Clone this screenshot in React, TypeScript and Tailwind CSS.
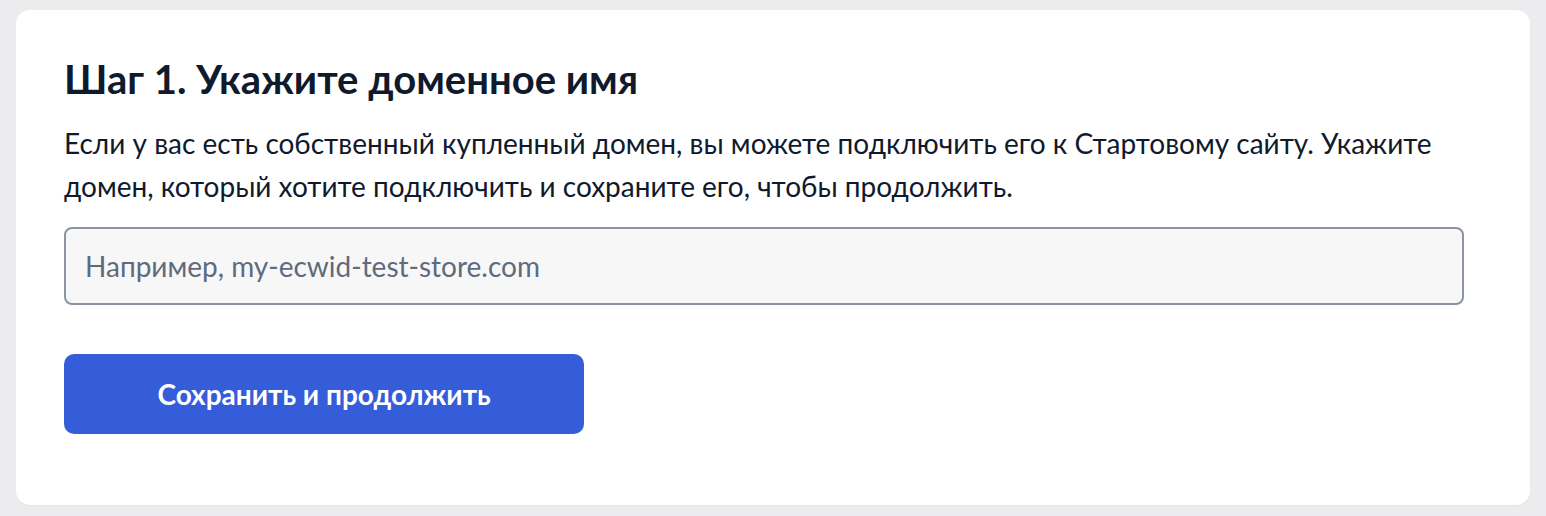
export default function App() {
  return (
    <div className="min-h-[516px] bg-[#ececee] px-4 pt-[10px] pb-[11px] font-['Lato',sans-serif]">
      <div className="rounded-[14px] bg-white px-12 pt-[45px] pb-[71px] shadow-[0_1px_2px_rgba(0,0,0,0.04)]">
        <h1 className="text-[40px] font-bold leading-[48px] text-[#0f1a2c]">
          Шаг 1. Укажите доменное имя
        </h1>
        <p className="mt-[19px] max-w-[1400px] text-[28px] leading-[43px] text-[#0f1a2c]">
          Если у вас есть собственный купленный домен, вы можете подключить его к Стартовому сайту. Укажите
          домен, который хотите подключить и сохраните его, чтобы продолжить.
        </p>
        <input
          type="text"
          placeholder="Например, my-ecwid-test-store.com"
          className="mt-[19px] block h-[78px] w-[1400px] rounded-[8px] border-2 border-[#8a94a3] bg-[#f7f7f7] px-[19px] text-[28px] text-[#0f1a2c] outline-none placeholder:text-[#5f6b7d]"
        />
        <button className="mt-[49px] h-[80px] w-[520px] rounded-[10px] bg-[#365dd9] text-[28px] font-bold text-white">
          Сохранить и продолжить
        </button>
      </div>
    </div>
  );
}
